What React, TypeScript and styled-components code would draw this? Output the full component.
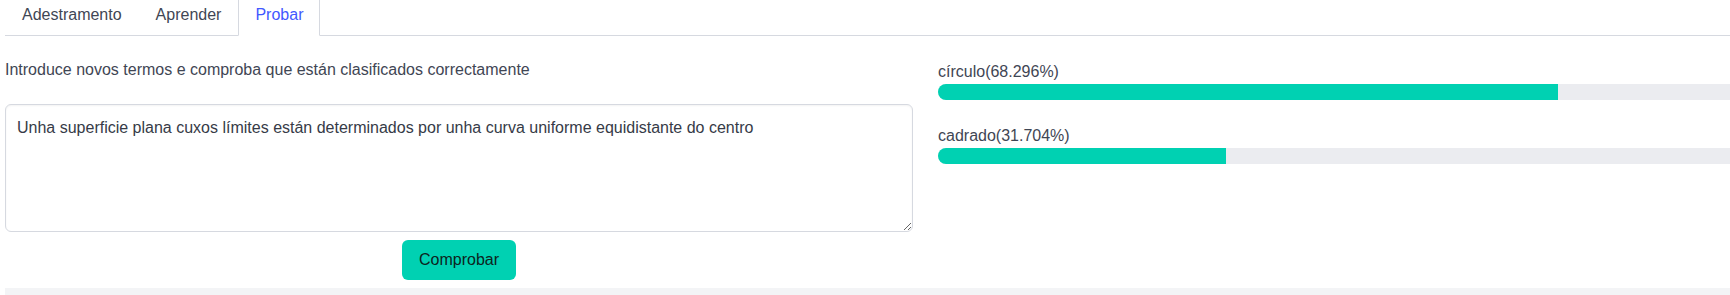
import { FunctionComponent, useState } from "react";
import styled, { createGlobalStyle } from "styled-components";

const GlobalStyle = createGlobalStyle`
  html, body {
    margin: 0;
    padding: 0;
    overflow: hidden;
    background: #ffffff;
  }
  body {
    font-family: "Liberation Sans", Arial, sans-serif;
    font-size: 16px;
    line-height: 1.5;
    color: #3f4654;
  }
`;

const Page = styled.div`
  width: 1841px;
  margin-top: -6px;
  padding-left: 5px;
`;

const TabList = styled.ul`
  display: flex;
  margin: 0 0 24px;
  padding: 0;
  list-style: none;
  border-bottom: 1px solid #d6d9e0;
`;

const Tab = styled.li<{ $active?: boolean }>`
  margin-bottom: -1px;
  padding: 8px 16px;
  border: 1px solid transparent;
  border-radius: 6px 6px 0 0;
  cursor: pointer;
  color: ${(p) => (p.$active ? "#4258ff" : "#3f4654")};
  background: ${(p) => (p.$active ? "#ffffff" : "transparent")};
  border-color: ${(p) => (p.$active ? "#d6d9e0" : "transparent")};
  border-bottom-color: transparent;
`;

const Columns = styled.div`
  display: grid;
  grid-template-columns: 908px 908px;
  column-gap: 25px;
`;

const LeftColumn = styled.div`
  display: flex;
  flex-direction: column;
`;

const Intro = styled.p`
  margin: -2px 0 22px;
`;

const TextArea = styled.textarea`
  box-sizing: border-box;
  display: block;
  width: 100%;
  height: 128px;
  padding: 11px;
  border: 1px solid #d6d9e0;
  border-radius: 6px;
  box-shadow: inset 0 1px 2px rgba(10, 10, 10, 0.05);
  font-family: inherit;
  font-size: 16px;
  line-height: 1.5;
  color: #363b47;
  resize: vertical;
  outline: none;
`;

const ButtonRow = styled.div`
  display: flex;
  justify-content: center;
  margin-top: 8px;
`;

const PrimaryButton = styled.button`
  box-sizing: border-box;
  height: 40px;
  padding: 0 16px;
  border: 1px solid transparent;
  border-radius: 6px;
  background: #00d1b2;
  color: #0d2420;
  font-family: inherit;
  font-size: 16px;
  line-height: 1.5;
  cursor: pointer;
`;

const ResultItem = styled.div`
  margin-bottom: 24px;
`;

const ResultLabel = styled.div`
  line-height: 24px;
`;

const Track = styled.div`
  height: 16px;
  border-radius: 9999px;
  background: #ebecf0;
  overflow: hidden;
`;

const Fill = styled.div`
  height: 100%;
  background: #00d1b2;
`;

const FooterBand = styled.div`
  height: 10px;
  margin-top: 8px;
  background: #f3f4f6;
`;

const results = [
  { label: "círculo", value: 68.296 },
  { label: "cadrado", value: 31.704 },
];

const tabs = ["Adestramento", "Aprender", "Probar"];

const App: FunctionComponent = () => {
  const [active, setActive] = useState("Probar");
  const [text, setText] = useState(
    "Unha superficie plana cuxos límites están determinados por unha curva uniforme equidistante do centro"
  );

  return (
    <Page>
      <GlobalStyle />
      <TabList>
        {tabs.map((t) => (
          <Tab key={t} $active={t === active} onClick={() => setActive(t)}>
            {t}
          </Tab>
        ))}
      </TabList>
      <Columns>
        <LeftColumn>
          <Intro>Introduce novos termos e comproba que están clasificados correctamente</Intro>
          <TextArea value={text} onChange={(e) => setText(e.target.value)} />
          <ButtonRow>
            <PrimaryButton>Comprobar</PrimaryButton>
          </ButtonRow>
        </LeftColumn>
        <div>
          {results.map((r) => (
            <ResultItem key={r.label}>
              <ResultLabel>
                {r.label}({r.value.toFixed(3)}%)
              </ResultLabel>
              <Track>
                <Fill style={{ width: `${r.value}%` }} />
              </Track>
            </ResultItem>
          ))}
        </div>
      </Columns>
      <FooterBand />
    </Page>
  );
};

export default App;
